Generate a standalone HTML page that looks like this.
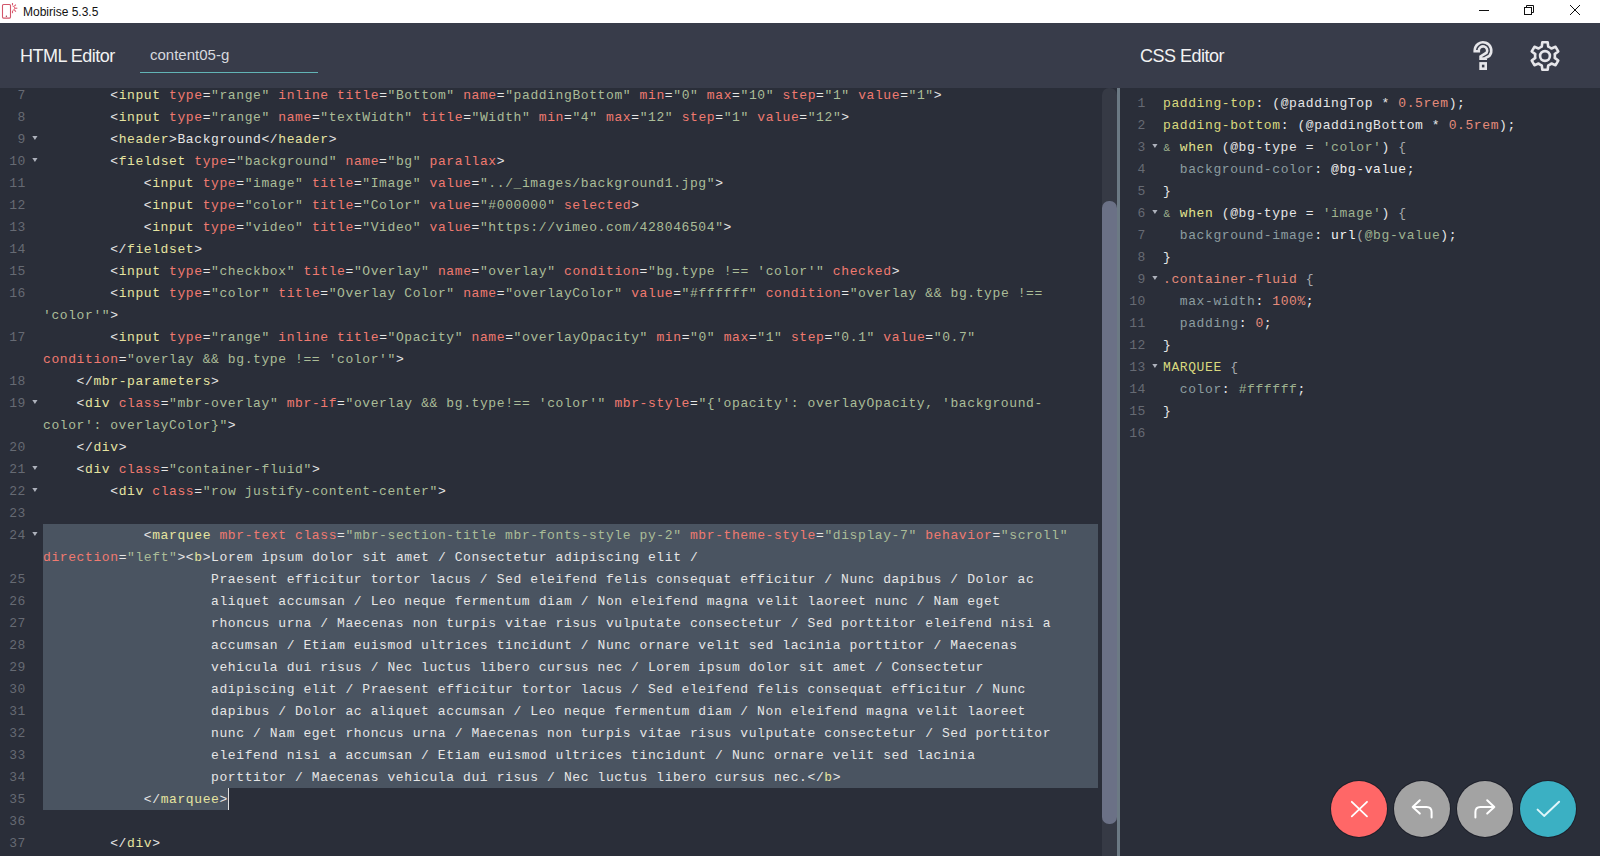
<!DOCTYPE html>
<html><head><meta charset="utf-8">
<style>
html,body{margin:0;padding:0;}
body{width:1600px;height:856px;overflow:hidden;position:relative;background:#2a2e39;font-family:"Liberation Sans",sans-serif;}
#title{position:absolute;left:0;top:0;width:1600px;height:23px;background:#fff;}
#title .t{position:absolute;left:23px;top:5px;font-size:12px;line-height:14px;color:#111;}
#header{position:absolute;left:0;top:23px;width:1600px;height:65px;background:#383c4a;}
.h1{position:absolute;font-size:18px;letter-spacing:-0.5px;color:#f2f2f2;line-height:20px;}
#tab{position:absolute;left:150px;top:46px;font-size:15px;color:#d6d8de;line-height:18px;}
#tabline{position:absolute;left:140px;top:72px;width:178px;height:1px;background:#62b4b6;}
#ed{position:absolute;left:0;top:88px;width:1102px;height:768px;overflow:hidden;background:#2a2e39;}
.row,.ln,.crow,.cln{position:absolute;height:22px;line-height:22px;font-family:"Liberation Mono",monospace;font-size:13px;letter-spacing:0.6px;white-space:pre;}
.row{left:43px;color:#e6e6e6;}
.ln{left:0;width:26px;text-align:right;color:#666a73;}
.fold,.cfold{position:absolute;left:32px;width:7px;height:6px;margin-top:6.5px;background:#aeb2bc;clip-path:polygon(0.3px 0.5px,5.5px 0.5px,2.9px 4.6px);}
.tag{color:#e6e4a0;} .attr{color:#f07a70;} .str{color:#abbd98;}
#sel1{position:absolute;left:43px;top:436px;width:1055px;height:264px;background:#4a5461;}
#sel2{position:absolute;left:43px;top:700px;width:185px;height:22px;background:#4a5461;}
#cursor{position:absolute;left:228px;top:700px;width:1px;height:22px;background:#e0e0e0;}
#track{position:absolute;left:1102px;top:88px;width:14.5px;height:768px;border-radius:7px 7px 0 0;background:#363a45;}
#thumb{position:absolute;left:1102px;top:201px;width:15px;height:623px;border-radius:7px;background:#6b7186;}
#sep{position:absolute;left:1117px;top:88px;width:3px;height:768px;background:#6c7a84;}
#css{position:absolute;left:1120px;top:88px;width:480px;height:768px;overflow:hidden;background:#2a2e39;}
.crow{left:43px;color:#e6e6e6;}
.cln{left:0;width:26px;text-align:right;color:#666a73;}

.amp{color:#9fb290;font-size:11px;display:inline-block;width:7.8px;padding-left:0.6px;} .cy{color:#d9d97e;} .cyb{color:#e2e48e;} .cn{color:#e58b7a;} .cg{color:#9fb290;} .cp{color:#8c9da0;} .cb{color:#f4f4f4;} .cw{color:#f2f2f2;} .cd{color:#a8aaae;}
.btn{position:absolute;top:781px;width:56px;height:56px;border-radius:50%;box-shadow:0 0 0 1px rgba(10,10,16,0.35);}
</style></head><body>
<div id="title">
 <svg style="position:absolute;left:0;top:0" width="20" height="22" viewBox="0 0 20 22">
  <rect x="2.5" y="4.5" width="8" height="13.6" rx="1" fill="none" stroke="#d2566a" stroke-width="1.1"/>
  <circle cx="6.4" cy="16.2" r="0.7" fill="#a04050"/>
  <path d="M12.5 6 A2.2 2.2 0 0 1 12.5 10.4" fill="none" stroke="#e86a7a" stroke-width="1"/>
  <g stroke="#d85a6e" stroke-width="1.1"><line x1="12.5" y1="3" x2="12.5" y2="5.2"/><line x1="12.5" y1="11" x2="12.5" y2="13.2"/><line x1="15" y1="8.2" x2="17.3" y2="8.2"/><line x1="14.4" y1="6.2" x2="15.9" y2="4.7"/><line x1="14.4" y1="10.2" x2="15.9" y2="11.7"/></g>
 </svg>
 <div class="t">Mobirise 5.3.5</div>
 <svg style="position:absolute;left:1470px;top:0" width="130" height="23" viewBox="0 0 130 23">
  <line x1="9" y1="10.5" x2="19" y2="10.5" stroke="#111" stroke-width="1"/>
  <rect x="54.5" y="7.5" width="7" height="7" fill="none" stroke="#111" stroke-width="1"/>
  <path d="M56.5 7.5 V5.5 H63.5 V12.5 H61.5" fill="none" stroke="#111" stroke-width="1"/>
  <path d="M100 5 L110 15 M110 5 L100 15" stroke="#111" stroke-width="1"/>
 </svg>
</div>
<div id="header">
 <div class="h1" style="left:20px;top:23px">HTML Editor</div>
 <div class="h1" style="left:1140px;top:23px">CSS Editor</div>
 <svg style="position:absolute;left:1465px;top:12px" width="40" height="40" viewBox="0 0 40 40">
  <path d="M9.7 16.2 V15.6 A8.3 8.3 0 1 1 24.4 20.9 L20.7 22.9 V23.6 H15.55 V21.4 L21.6 17.7 A4.2 4.2 0 1 0 13.8 15.6 V16.2 Z" fill="none" stroke="#e6e6ea" stroke-width="2.6" stroke-linejoin="miter"/>
  <rect x="15.6" y="28.4" width="5.1" height="5.3" fill="none" stroke="#e6e6ea" stroke-width="2.6"/>
 </svg>
 <svg style="position:absolute;left:1528.4px;top:15.5px" width="34" height="34" viewBox="0 0 34 34"><path d="M13.78 7.64 L14.33 3.26 L19.67 3.26 L20.22 7.64 A9.9 9.9 0 0 1 23.49 9.53 L27.57 7.82 L30.24 12.44 L26.72 15.11 A9.9 9.9 0 0 1 26.72 18.89 L30.24 21.56 L27.57 26.18 L23.49 24.47 A9.9 9.9 0 0 1 20.22 26.36 L19.67 30.74 L14.33 30.74 L13.78 26.36 A9.9 9.9 0 0 1 10.51 24.47 L6.43 26.18 L3.76 21.56 L7.28 18.89 A9.9 9.9 0 0 1 7.28 15.11 L3.76 12.44 L6.43 7.82 L10.51 9.53 A9.9 9.9 0 0 1 13.78 7.64 Z" fill="none" stroke="#e6e6ea" stroke-width="2.6" stroke-linejoin="round"/><circle cx="17" cy="17" r="4.9" fill="none" stroke="#e6e6ea" stroke-width="2.6"/></svg>
</div>
<div id="tab">content05-g</div>
<div id="tabline"></div>
<div id="ed">
 <div id="sel1"></div><div id="sel2"></div><div id="cursor"></div>
 <div style="position:absolute;left:0;top:-88px;">
<div class="ln" style="top:85px">7</div>
<div class="row" style="top:85px">        &lt;<span class="tag">input</span> <span class="attr">type</span>=<span class="str">&quot;range&quot;</span> <span class="attr">inline</span> <span class="attr">title</span>=<span class="str">&quot;Bottom&quot;</span> <span class="attr">name</span>=<span class="str">&quot;paddingBottom&quot;</span> <span class="attr">min</span>=<span class="str">&quot;0&quot;</span> <span class="attr">max</span>=<span class="str">&quot;10&quot;</span> <span class="attr">step</span>=<span class="str">&quot;1&quot;</span> <span class="attr">value</span>=<span class="str">&quot;1&quot;</span>&gt;</div>
<div class="ln" style="top:107px">8</div>
<div class="row" style="top:107px">        &lt;<span class="tag">input</span> <span class="attr">type</span>=<span class="str">&quot;range&quot;</span> <span class="attr">name</span>=<span class="str">&quot;textWidth&quot;</span> <span class="attr">title</span>=<span class="str">&quot;Width&quot;</span> <span class="attr">min</span>=<span class="str">&quot;4&quot;</span> <span class="attr">max</span>=<span class="str">&quot;12&quot;</span> <span class="attr">step</span>=<span class="str">&quot;1&quot;</span> <span class="attr">value</span>=<span class="str">&quot;12&quot;</span>&gt;</div>
<div class="ln" style="top:129px">9</div>
<div class="fold" style="top:129px"></div>
<div class="row" style="top:129px">        &lt;<span class="tag">header</span>&gt;Background&lt;/<span class="tag">header</span>&gt;</div>
<div class="ln" style="top:151px">10</div>
<div class="fold" style="top:151px"></div>
<div class="row" style="top:151px">        &lt;<span class="tag">fieldset</span> <span class="attr">type</span>=<span class="str">&quot;background&quot;</span> <span class="attr">name</span>=<span class="str">&quot;bg&quot;</span> <span class="attr">parallax</span>&gt;</div>
<div class="ln" style="top:173px">11</div>
<div class="row" style="top:173px">            &lt;<span class="tag">input</span> <span class="attr">type</span>=<span class="str">&quot;image&quot;</span> <span class="attr">title</span>=<span class="str">&quot;Image&quot;</span> <span class="attr">value</span>=<span class="str">&quot;../_images/background1.jpg&quot;</span>&gt;</div>
<div class="ln" style="top:195px">12</div>
<div class="row" style="top:195px">            &lt;<span class="tag">input</span> <span class="attr">type</span>=<span class="str">&quot;color&quot;</span> <span class="attr">title</span>=<span class="str">&quot;Color&quot;</span> <span class="attr">value</span>=<span class="str">&quot;#000000&quot;</span> <span class="attr">selected</span>&gt;</div>
<div class="ln" style="top:217px">13</div>
<div class="row" style="top:217px">            &lt;<span class="tag">input</span> <span class="attr">type</span>=<span class="str">&quot;video&quot;</span> <span class="attr">title</span>=<span class="str">&quot;Video&quot;</span> <span class="attr">value</span>=<span class="str">&quot;https://vimeo.com/428046504&quot;</span>&gt;</div>
<div class="ln" style="top:239px">14</div>
<div class="row" style="top:239px">        &lt;/<span class="tag">fieldset</span>&gt;</div>
<div class="ln" style="top:261px">15</div>
<div class="row" style="top:261px">        &lt;<span class="tag">input</span> <span class="attr">type</span>=<span class="str">&quot;checkbox&quot;</span> <span class="attr">title</span>=<span class="str">&quot;Overlay&quot;</span> <span class="attr">name</span>=<span class="str">&quot;overlay&quot;</span> <span class="attr">condition</span>=<span class="str">&quot;bg.type !== &#x27;color&#x27;&quot;</span> <span class="attr">checked</span>&gt;</div>
<div class="ln" style="top:283px">16</div>
<div class="row" style="top:283px">        &lt;<span class="tag">input</span> <span class="attr">type</span>=<span class="str">&quot;color&quot;</span> <span class="attr">title</span>=<span class="str">&quot;Overlay Color&quot;</span> <span class="attr">name</span>=<span class="str">&quot;overlayColor&quot;</span> <span class="attr">value</span>=<span class="str">&quot;#ffffff&quot;</span> <span class="attr">condition</span>=<span class="str">&quot;overlay &amp;&amp; bg.type !==</span></div>
<div class="row" style="top:305px"><span class="str">&#x27;color&#x27;&quot;</span>&gt;</div>
<div class="ln" style="top:327px">17</div>
<div class="row" style="top:327px">        &lt;<span class="tag">input</span> <span class="attr">type</span>=<span class="str">&quot;range&quot;</span> <span class="attr">inline</span> <span class="attr">title</span>=<span class="str">&quot;Opacity&quot;</span> <span class="attr">name</span>=<span class="str">&quot;overlayOpacity&quot;</span> <span class="attr">min</span>=<span class="str">&quot;0&quot;</span> <span class="attr">max</span>=<span class="str">&quot;1&quot;</span> <span class="attr">step</span>=<span class="str">&quot;0.1&quot;</span> <span class="attr">value</span>=<span class="str">&quot;0.7&quot;</span></div>
<div class="row" style="top:349px"><span class="attr">condition</span>=<span class="str">&quot;overlay &amp;&amp; bg.type !== &#x27;color&#x27;&quot;</span>&gt;</div>
<div class="ln" style="top:371px">18</div>
<div class="row" style="top:371px">    &lt;/<span class="tag">mbr-parameters</span>&gt;</div>
<div class="ln" style="top:393px">19</div>
<div class="fold" style="top:393px"></div>
<div class="row" style="top:393px">    &lt;<span class="tag">div</span> <span class="attr">class</span>=<span class="str">&quot;mbr-overlay&quot;</span> <span class="attr">mbr-if</span>=<span class="str">&quot;overlay &amp;&amp; bg.type!== &#x27;color&#x27;&quot;</span> <span class="attr">mbr-style</span>=<span class="str">&quot;{&#x27;opacity&#x27;: overlayOpacity, &#x27;background-</span></div>
<div class="row" style="top:415px"><span class="str">color&#x27;: overlayColor}&quot;</span>&gt;</div>
<div class="ln" style="top:437px">20</div>
<div class="row" style="top:437px">    &lt;/<span class="tag">div</span>&gt;</div>
<div class="ln" style="top:459px">21</div>
<div class="fold" style="top:459px"></div>
<div class="row" style="top:459px">    &lt;<span class="tag">div</span> <span class="attr">class</span>=<span class="str">&quot;container-fluid&quot;</span>&gt;</div>
<div class="ln" style="top:481px">22</div>
<div class="fold" style="top:481px"></div>
<div class="row" style="top:481px">        &lt;<span class="tag">div</span> <span class="attr">class</span>=<span class="str">&quot;row justify-content-center&quot;</span>&gt;</div>
<div class="ln" style="top:503px">23</div>
<div class="row" style="top:503px"></div>
<div class="ln" style="top:525px">24</div>
<div class="fold" style="top:525px"></div>
<div class="row" style="top:525px">            &lt;<span class="tag">marquee</span> <span class="attr">mbr-text</span> <span class="attr">class</span>=<span class="str">&quot;mbr-section-title mbr-fonts-style py-2&quot;</span> <span class="attr">mbr-theme-style</span>=<span class="str">&quot;display-7&quot;</span> <span class="attr">behavior</span>=<span class="str">&quot;scroll&quot;</span></div>
<div class="row" style="top:547px"><span class="attr">direction</span>=<span class="str">&quot;left&quot;</span>&gt;&lt;<span class="tag">b</span>&gt;Lorem ipsum dolor sit amet / Consectetur adipiscing elit / </div>
<div class="ln" style="top:569px">25</div>
<div class="row" style="top:569px">                    Praesent efficitur tortor lacus / Sed eleifend felis consequat efficitur / Nunc dapibus / Dolor ac</div>
<div class="ln" style="top:591px">26</div>
<div class="row" style="top:591px">                    aliquet accumsan / Leo neque fermentum diam / Non eleifend magna velit laoreet nunc / Nam eget</div>
<div class="ln" style="top:613px">27</div>
<div class="row" style="top:613px">                    rhoncus urna / Maecenas non turpis vitae risus vulputate consectetur / Sed porttitor eleifend nisi a</div>
<div class="ln" style="top:635px">28</div>
<div class="row" style="top:635px">                    accumsan / Etiam euismod ultrices tincidunt / Nunc ornare velit sed lacinia porttitor / Maecenas</div>
<div class="ln" style="top:657px">29</div>
<div class="row" style="top:657px">                    vehicula dui risus / Nec luctus libero cursus nec / Lorem ipsum dolor sit amet / Consectetur</div>
<div class="ln" style="top:679px">30</div>
<div class="row" style="top:679px">                    adipiscing elit / Praesent efficitur tortor lacus / Sed eleifend felis consequat efficitur / Nunc</div>
<div class="ln" style="top:701px">31</div>
<div class="row" style="top:701px">                    dapibus / Dolor ac aliquet accumsan / Leo neque fermentum diam / Non eleifend magna velit laoreet</div>
<div class="ln" style="top:723px">32</div>
<div class="row" style="top:723px">                    nunc / Nam eget rhoncus urna / Maecenas non turpis vitae risus vulputate consectetur / Sed porttitor</div>
<div class="ln" style="top:745px">33</div>
<div class="row" style="top:745px">                    eleifend nisi a accumsan / Etiam euismod ultrices tincidunt / Nunc ornare velit sed lacinia</div>
<div class="ln" style="top:767px">34</div>
<div class="row" style="top:767px">                    porttitor / Maecenas vehicula dui risus / Nec luctus libero cursus nec.&lt;/<span class="tag">b</span>&gt;</div>
<div class="ln" style="top:789px">35</div>
<div class="row" style="top:789px">            &lt;/<span class="tag">marquee</span>&gt;</div>
<div class="ln" style="top:811px">36</div>
<div class="row" style="top:811px"></div>
<div class="ln" style="top:833px">37</div>
<div class="row" style="top:833px">        &lt;/<span class="tag">div</span>&gt;</div>
 </div>
</div>
<div id="track"></div>
<div id="thumb"></div>
<div id="sep"></div>
<div id="css">
 <div style="position:absolute;left:0;top:-88px;">
<div class="cln" style="top:93px">1</div>
<div class="crow" style="top:93px"><span class="cy">padding-top</span>: (@paddingTop * <span class="cn">0.5rem</span>);</div>
<div class="cln" style="top:115px">2</div>
<div class="crow" style="top:115px"><span class="cy">padding-bottom</span>: (@paddingBottom * <span class="cn">0.5rem</span>);</div>
<div class="cln" style="top:137px">3</div>
<div class="cfold" style="top:137px"></div>
<div class="crow" style="top:137px"><span class="amp">&amp;</span> <span class="cyb">when</span> (@bg-type = <span class="cg">&#x27;color&#x27;</span>) <span class="cd">{</span></div>
<div class="cln" style="top:159px">4</div>
<div class="crow" style="top:159px">  <span class="cp">background-color</span>: <span class="cw">@bg-value</span>;</div>
<div class="cln" style="top:181px">5</div>
<div class="crow" style="top:181px">}</div>
<div class="cln" style="top:203px">6</div>
<div class="cfold" style="top:203px"></div>
<div class="crow" style="top:203px"><span class="amp">&amp;</span> <span class="cyb">when</span> (@bg-type = <span class="cg">&#x27;image&#x27;</span>) <span class="cd">{</span></div>
<div class="cln" style="top:225px">7</div>
<div class="crow" style="top:225px">  <span class="cp">background-image</span>: <span class="cb">url</span><span class="cd">(</span><span class="cg">@bg-value</span>);</div>
<div class="cln" style="top:247px">8</div>
<div class="crow" style="top:247px">}</div>
<div class="cln" style="top:269px">9</div>
<div class="cfold" style="top:269px"></div>
<div class="crow" style="top:269px"><span class="cn">.container-fluid</span> <span class="cd">{</span></div>
<div class="cln" style="top:291px">10</div>
<div class="crow" style="top:291px">  <span class="cp">max-width</span>: <span class="cn">100%</span>;</div>
<div class="cln" style="top:313px">11</div>
<div class="crow" style="top:313px">  <span class="cp">padding</span>: <span class="cn">0</span>;</div>
<div class="cln" style="top:335px">12</div>
<div class="crow" style="top:335px">}</div>
<div class="cln" style="top:357px">13</div>
<div class="cfold" style="top:357px"></div>
<div class="crow" style="top:357px"><span class="cy">MARQUEE</span> <span class="cd">{</span></div>
<div class="cln" style="top:379px">14</div>
<div class="crow" style="top:379px">  <span class="cp">color</span>: <span class="cg">#ffffff</span>;</div>
<div class="cln" style="top:401px">15</div>
<div class="crow" style="top:401px">}</div>
<div class="cln" style="top:423px">16</div>
<div class="crow" style="top:423px"></div>
 </div>
</div>
<div class="btn" style="left:1331px;background:#ff6767;">
 <svg width="56" height="56" viewBox="0 0 56 56"><path d="M20.8 20.8 L36 35.4 M36 20.8 L20.8 35.4" stroke="#fff" stroke-width="1.8" stroke-linecap="round"/></svg>
</div>
<div class="btn" style="left:1394px;background:#a3a3a3;">
 <svg width="56" height="56" viewBox="0 0 56 56"><path d="M25.8 19.3 L18.7 26 L25.8 32.6 M18.7 26 H32.6 Q37.6 26 37.6 31 V36.4" fill="none" stroke="#fff" stroke-width="2" stroke-linecap="round" stroke-linejoin="round"/></svg>
</div>
<div class="btn" style="left:1457px;background:#a3a3a3;">
 <svg width="56" height="56" viewBox="0 0 56 56"><path d="M30.2 19.3 L37.3 26 L30.2 32.6 M37.3 26 H23.4 Q18.4 26 18.4 31 V36.4" fill="none" stroke="#fff" stroke-width="2" stroke-linecap="round" stroke-linejoin="round"/></svg>
</div>
<div class="btn" style="left:1520px;background:#3bb0c3;">
 <svg width="56" height="56" viewBox="0 0 56 56"><path d="M17.6 28.6 L24.1 34.9 L39.1 20.8" fill="none" stroke="#dff6fa" stroke-width="2" stroke-linecap="round" stroke-linejoin="round"/></svg>
</div>
</body></html>
